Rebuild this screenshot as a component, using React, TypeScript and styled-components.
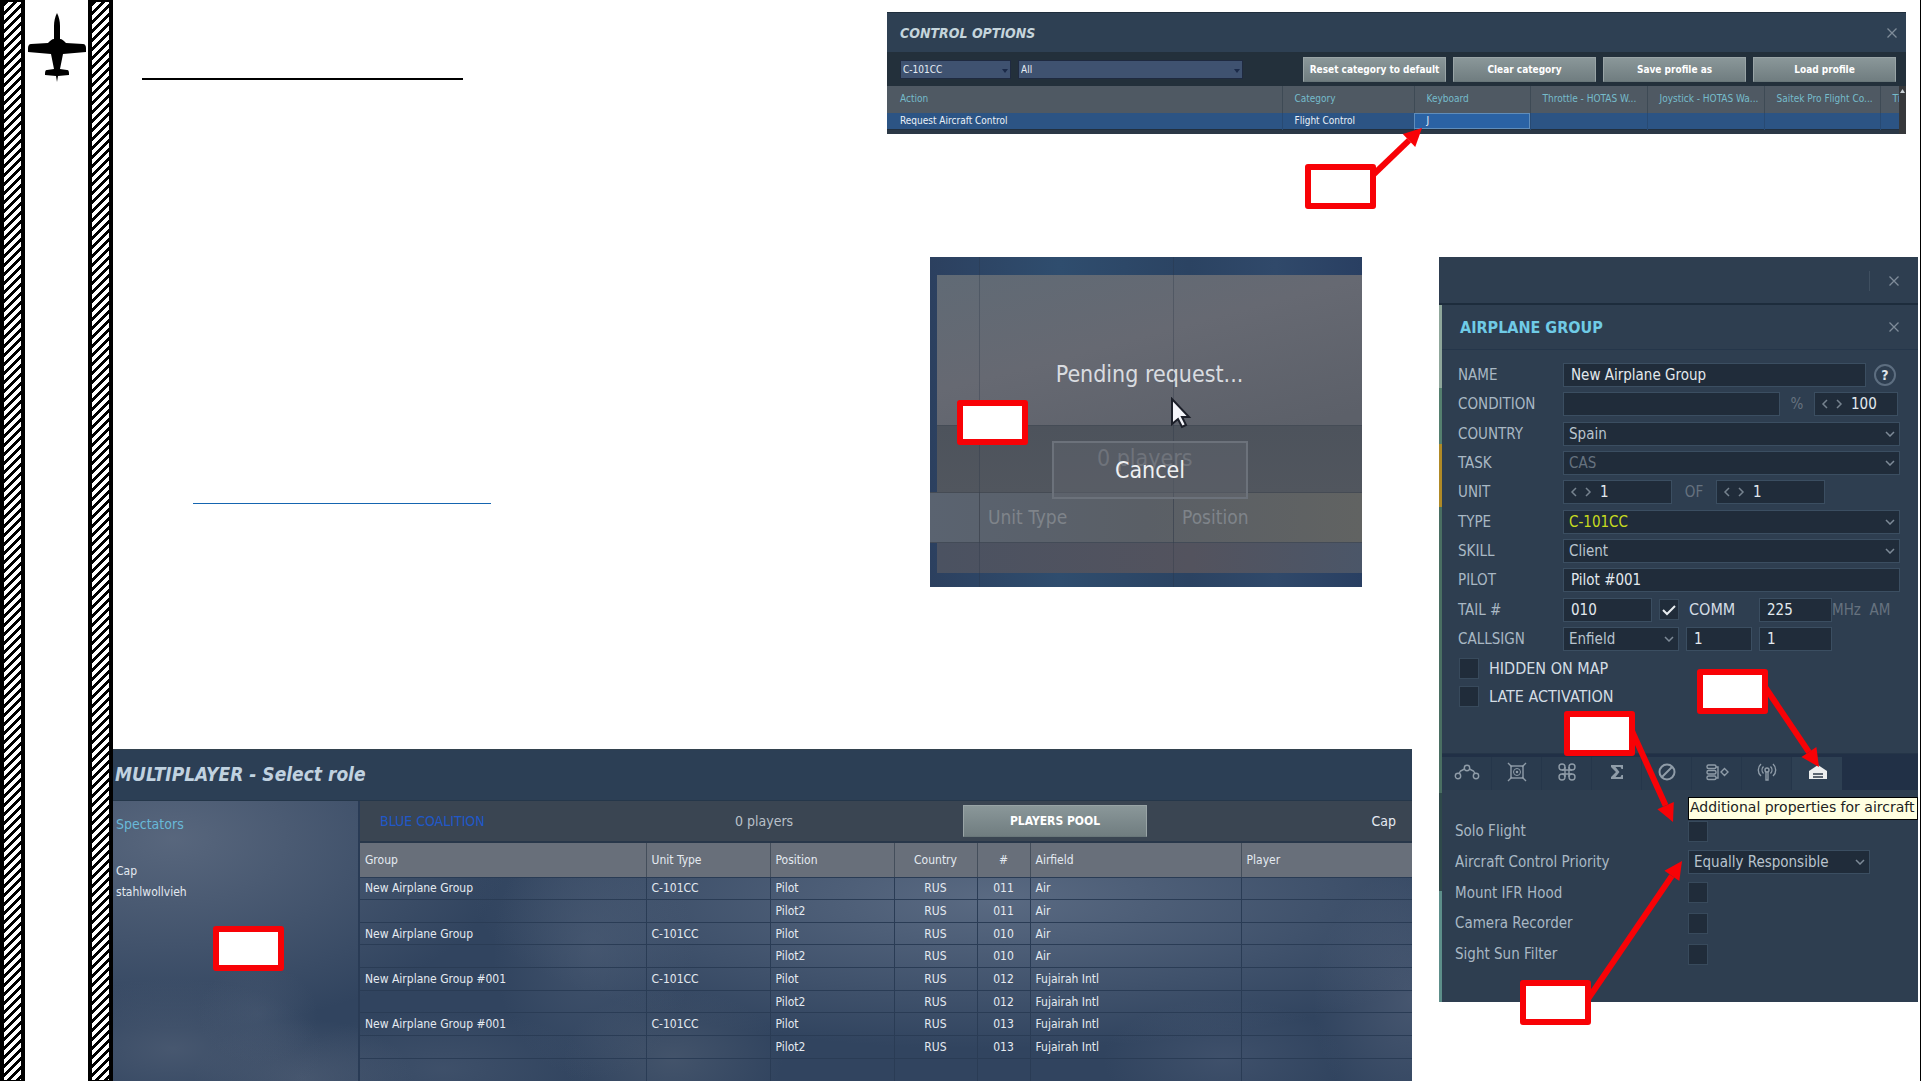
import React from 'react';
import styled, { createGlobalStyle, css } from 'styled-components';

const condensed = `'DejaVu Sans Condensed', 'DejaVu Sans', sans-serif`;

const GlobalStyle = createGlobalStyle`
  *, *::before, *::after { box-sizing: border-box; }
  body { margin: 0; background: #fff; font-family: ${condensed}; }
  button, input, select { font-family: inherit; margin: 0; }
`;

/* ---------- page ---------- */

const Page = styled.div`
  display: flex;
  min-height: 100vh;
  overflow: hidden;
  border-right: 1px solid #000;
`;

const Rail = styled.aside`
  display: flex;
  justify-content: space-between;
  flex: 0 0 113px;
`;

const Hatch = styled.div`
  width: 25px;
  border: 4px solid #000;
  border-top-width: 2px;
  border-bottom-width: 1px;
  background: linear-gradient(135deg, #000 0 23%, #fff 23% 50%, #000 50% 73%, #fff 73%) 0 0 / 9px 9px;
`;

const PlaneIcon = styled.svg`
  width: 58px;
  height: 70px;
  margin-top: 12px;
`;

const Main = styled.main`
  flex: 1;
  min-width: 0;
  display: flex;
  flex-direction: column;
`;

const TopRow = styled.div`
  display: flex;
  justify-content: space-between;
  align-items: flex-start;
  padding: 12px 14px 0 29px;
  margin-bottom: 123px;
`;

const BottomRow = styled.div`
  flex: 1;
  display: flex;
  justify-content: space-between;
  align-items: flex-start;
  gap: 27px;
  padding-right: 2px;
`;

const LeftColumn = styled.div`
  flex: 1;
  min-width: 0;
  display: flex;
  flex-direction: column;
  gap: 162px;
`;

const RequestRow = styled.div`
  display: flex;
  justify-content: space-between;
  align-items: flex-start;
  padding: 0 50px 0 80px;
`;

const TitleRule = styled.hr`
  width: 321px;
  margin: 66px 0 0;
  border: 0;
  border-top: 2px solid #000;
`;

const LinkRule = styled.hr`
  width: 298px;
  margin: 246px 0 0;
  border: 0;
  border-top: 1px solid #1565b0;
`;

/* ---------- annotations ---------- */

const Overlay = styled.div`
  position: absolute;
  inset: 0;
  z-index: 5;
  pointer-events: none;
`;

const Box = styled.div<{ $x: number; $y: number }>`
  position: absolute;
  left: ${p => p.$x}px;
  top: ${p => p.$y}px;
  width: 71px;
  height: 45px;
  background: #fff;
  border: 6px solid #f80206;
  border-radius: 3px;
`;

const ArrowLayer = styled.svg`
  position: absolute;
  inset: 0;
  width: 100%;
  height: 100%;
  overflow: visible;
`;

type Line = [number, number, number, number];

function Arrow({ line }: { line: Line }) {
  const [x1, y1, x2, y2] = line;
  const len = Math.hypot(x2 - x1, y2 - y1);
  const ux = (x2 - x1) / len;
  const uy = (y2 - y1) / len;
  const bx = x2 - ux * 18;
  const by = y2 - uy * 18;
  return (
    <g fill="#f80206" stroke="#f80206">
      <line x1={x1} y1={y1} x2={bx} y2={by} strokeWidth="6" />
      <polygon stroke="none" points={`${x2},${y2} ${bx - uy * 9},${by + ux * 9} ${bx + uy * 9},${by - ux * 9}`} />
    </g>
  );
}

function Annotations({ boxes, arrows = [] }: { boxes: [number, number][]; arrows?: Line[] }) {
  return (
    <Overlay aria-hidden="true">
      <ArrowLayer>{arrows.map((a, i) => <Arrow key={i} line={a} />)}</ArrowLayer>
      {boxes.map(([x, y]) => <Box key={`${x}-${y}`} $x={x} $y={y} />)}
    </Overlay>
  );
}

/* ---------- shared controls ---------- */

const silver = css`
  border: 1px solid #99a4a6;
  border-bottom-color: #69777a;
  background: linear-gradient(#8a9799, #707d80);
  color: #fff;
  font-weight: bold;
  padding: 0;
  white-space: nowrap;
`;

const CloseButton = styled.button`
  display: grid;
  place-items: center;
  width: 12px;
  height: 12px;
  padding: 0;
  border: 0;
  background: none;
  color: #7f8c99;
`;

function Close() {
  return (
    <CloseButton aria-label="Close">
      <svg width="12" height="12" viewBox="0 0 12 12" stroke="currentColor" strokeWidth="1.3">
        <path d="M1.500 1.500l9 9M10.500 1.500l-9 9" />
      </svg>
    </CloseButton>
  );
}

/* ---------- control options ---------- */

const ControlPanel = styled.section`
  position: relative;
  width: 1019px;
  height: 122px;
  background: #263440;
`;

const ControlHeader = styled.header`
  display: flex;
  align-items: center;
  justify-content: space-between;
  height: 40px;
  padding: 0 8px 0 13px;
  border-top: 1px solid #1f2e3d;
  background: #2e4053;
`;

const ControlTitle = styled.h2`
  margin: 0;
  font: italic bold 14px ${condensed};
  color: #c5d5dc;
`;

const ControlBar = styled.div`
  display: flex;
  align-items: center;
  height: 34px;
  padding: 0 10px 0 13px;
  background: #23303b;
`;

const ComboWrap = styled.div<{ $w: number }>`
  position: relative;
  width: ${p => p.$w}px;
  margin-right: 7px;

  svg { position: absolute; right: 3px; top: 9px; }
`;

const Combo = styled.select`
  display: block;
  appearance: none;
  width: 100%;
  height: 19px;
  padding: 0 2px;
  border: 1px solid #1f2a40;
  border-radius: 0;
  background: #3f5270;
  color: #e6edf4;
  font-size: 10px;
`;

const ButtonGroup = styled.div`
  display: flex;
  gap: 7px;
  margin-left: auto;
`;

const BarButton = styled.button`
  ${silver}
  width: 143px;
  height: 25px;
  font-size: 10px;
`;

const GridArea = styled.div`
  display: flex;
  height: 48px;
  overflow: hidden;
`;

const BindTable = styled.table`
  flex: 1;
  table-layout: fixed;
  border-collapse: collapse;
  width: 100%;
  background: #4f5963;
  font-size: 10px;
  text-align: left;

  th, td {
    padding: 0 0 0 12px;
    border-right: 1px solid #3e4a55;
    white-space: nowrap;
    overflow: hidden;
  }
  th:first-child, td:first-child { padding-left: 13px; }
  th:last-child, td:last-child { border-right: 0; }
  th { height: 27px; padding-bottom: 2px; font-weight: normal; color: #76bccb; }
  td { height: 16px; background: #2c5484; color: #eaf1f8; line-height: 14px; border-right-color: #284a73; }
`;

const ActiveCell = styled.td`
  && { background: #2a62a4; outline: 1px solid #5f8dbb; outline-offset: -1px; }
`;

const NextRow = styled.tr`
  && td { height: 5px; background: #2b3846; border-top: 1px solid #22303f; }
`;

const ScrollTrack = styled.div`
  width: 7px;
  background: #36383b;
  svg { display: block; margin: 3px auto; }
`;

const bindHeads: [string, number | undefined][] = [
  ['Action', undefined], ['Category', 132], ['Keyboard', 116], ['Throttle - HOTAS W...', 117],
  ['Joystick - HOTAS Wa...', 117], ['Saitek Pro Flight Co...', 116], ['Ti', 19],
];

function ControlOptions() {
  return (
    <ControlPanel>
      <ControlHeader>
        <ControlTitle>CONTROL OPTIONS</ControlTitle>
        <Close />
      </ControlHeader>
      <ControlBar>
        <ComboWrap $w={111}>
          <Combo aria-label="Aircraft"><option>C-101CC</option></Combo>
          <svg width="6" height="4"><path d="M0 0h6L3 4z" fill="#1b2a48" /></svg>
        </ComboWrap>
        <ComboWrap $w={225}>
          <Combo aria-label="Category"><option>All</option></Combo>
          <svg width="6" height="4"><path d="M0 0h6L3 4z" fill="#1b2a48" /></svg>
        </ComboWrap>
        <ButtonGroup>
          <BarButton>Reset category to default</BarButton>
          <BarButton>Clear category</BarButton>
          <BarButton>Save profile as</BarButton>
          <BarButton>Load profile</BarButton>
        </ButtonGroup>
      </ControlBar>
      <GridArea>
        <BindTable>
          <colgroup>{bindHeads.map(([h, w]) => <col key={h} width={w} />)}</colgroup>
          <thead><tr>{bindHeads.map(([h]) => <th key={h}>{h}</th>)}</tr></thead>
          <tbody>
            <tr>
              <td>Request Aircraft Control</td><td>Flight Control</td><ActiveCell>J</ActiveCell>
              <td /><td /><td /><td />
            </tr>
            <NextRow><td colSpan={7} /></NextRow>
          </tbody>
        </BindTable>
        <ScrollTrack><svg width="5" height="4"><path d="M0 4h5L2.500 0z" fill="#c9d0d4" /></svg></ScrollTrack>
      </GridArea>
      <Annotations boxes={[[418, 152]]} arrows={[[487, 162, 535, 116]]} />
    </ControlPanel>
  );
}

/* ---------- pending request ---------- */

const Pending = styled.section`
  position: relative;
  width: 432px;
  height: 330px;
  flex: none;
  display: grid;
  grid-template-rows: 18px 217px 51px 30px 14px;
  background: linear-gradient(90deg, #2c405f, #2f4d6e 30%, #2b4362 60%, #30496a 80%, #293f62);
`;

const Veil = styled.div`
  grid-row: 2;
  margin-left: 7px;
  display: flex;
  flex-direction: column;
  background: linear-gradient(165deg, #606a75, #666972 35%, #5c6069 75%);
`;

const Message = styled.p`
  flex: 1;
  margin: 0;
  padding-top: 86px;
  text-align: center;
  font-size: 23px;
  line-height: 27px;
  color: #d9dce0;
`;

const VeilBand = styled.div`
  height: 67px;
  border-top: 1px solid #454c56;
  background: linear-gradient(#4d535c, #51565e);
`;

const GhostHeader = styled.div`
  grid-row: 3;
  display: grid;
  grid-template-columns: 49px 194px 1fr;
  align-items: center;
  border-top: 1px solid #454b54;
  border-bottom: 1px solid #434b57;
  background: linear-gradient(90deg, #5a6370, #5a5f66 50%, #616362);
  font-size: 19px;
  color: #7f848a;

  span { padding-left: 8px; border-left: 1px solid #50555d; line-height: 49px; }
`;

const VeilFoot = styled.div`
  grid-row: 4;
  margin-left: 7px;
  background: linear-gradient(90deg, #4b5261, #53535e 60%, #4b5668);
`;

const CancelButton = styled.button`
  position: absolute;
  left: 122px;
  top: 184px;
  width: 196px;
  height: 58px;
  padding: 0;
  border: 2px solid #6c727b;
  background: rgba(98, 103, 110, 0.45);
  color: #eef0f2;
  font-size: 23px;
  line-height: 54px;
`;

const GhostCount = styled.span`
  position: absolute;
  left: 167px;
  top: 188px;
  font-size: 23px;
  line-height: 27px;
  color: #7a7f86;
`;

const Cursor = styled.svg`
  position: absolute;
  left: 240px;
  top: 140px;
`;

const GridLine = styled.i<{ $x: number }>`
  position: absolute;
  left: ${p => p.$x}px;
  top: 0;
  bottom: 0;
  width: 1px;
  background: rgba(40, 50, 66, 0.3);
`;

function PendingRequest() {
  return (
    <Pending>
      <Veil>
        <Message>Pending request...</Message>
        <VeilBand />
      </Veil>
      <GhostHeader><div /><span>Unit Type</span><span>Position</span></GhostHeader>
      <VeilFoot />
      <GridLine $x={49} />
      <GridLine $x={243} />
      <GhostCount>0 players</GhostCount>
      <CancelButton>Cancel</CancelButton>
      <Cursor width="22" height="32" viewBox="0 0 22 32">
        <path d="M2 2v25l6-5 4 8 4-2-4-8h7z" fill="#f4f5fa" stroke="#1c1f29" strokeWidth="2" />
      </Cursor>
      <Annotations boxes={[[27, 143]]} />
    </Pending>
  );
}

/* ---------- multiplayer ---------- */

const Multi = styled.section`
  position: relative;
  display: flex;
  flex-direction: column;
  flex: 1;
  color: #e4eaf1;
  background:
    radial-gradient(ellipse 60px 50px at 145px 265px, rgba(80, 96, 120, 0.4), transparent),
    radial-gradient(ellipse 150px 70px at 60px 300px, rgba(86, 100, 122, 0.6), transparent),
    radial-gradient(ellipse 110px 60px at 190px 330px, rgba(84, 98, 120, 0.6), transparent),
    radial-gradient(ellipse 340px 190px at 60px 90px, rgba(92, 106, 128, 0.9), transparent),
    radial-gradient(ellipse 100px 130px at 480px 200px, rgba(84, 100, 124, 0.45), transparent),
    radial-gradient(ellipse 150px 60px at 330px 320px, rgba(78, 94, 118, 0.45), transparent),
    radial-gradient(ellipse 110px 70px at 560px 310px, rgba(82, 96, 116, 0.55), transparent),
    radial-gradient(ellipse 520px 150px at 880px 150px, rgba(92, 108, 132, 0.95), transparent),
    radial-gradient(ellipse 120px 60px at 1110px 310px, rgba(76, 92, 118, 0.5), transparent),
    radial-gradient(ellipse 100px 130px at 1300px 250px, rgba(84, 98, 122, 0.6), transparent),
    #31445f;
`;

const MultiTitle = styled.h2`
  margin: 0;
  height: 52px;
  padding-left: 2px;
  border-top: 1px solid #33424e;
  border-bottom: 1px solid #25374a;
  background: #2c3f55;
  font: italic bold 19px/49px ${condensed};
  color: #c0d2e0;
`;

const MultiBody = styled.div`
  flex: 1;
  display: flex;
`;

const Spectators = styled.div`
  width: 247px;
  padding: 13px 3px 0;
  border-right: 2px solid #293b55;
  font-size: 12px;

  h3 { margin: 0 0 26px; font-size: 14px; font-weight: normal; line-height: 21px; color: #68b9d8; }
  p { margin: 0; line-height: 21px; }
`;

const Roles = styled.div`
  flex: 1;
  min-width: 0;
`;

const Coalition = styled.div`
  display: grid;
  grid-template-columns: 355px 248px 184px 1fr;
  align-items: center;
  height: 42px;
  padding: 0 16px 0 0;
  border-bottom: 2px solid #28374a;
  background: #3a4552;
  font-size: 14px;
`;

const BlueName = styled.span`
  padding-left: 20px;
  color: #2058c8;
`;

const PlayerCount = styled.span`
  padding-left: 20px;
  color: #b9c0c9;
`;

const PoolButton = styled.button`
  ${silver}
  height: 32px;
  font-size: 12px;
`;

const Caption = styled.span`
  text-align: right;
`;

const RoleTable = styled.table`
  width: 100%;
  height: 238px;
  table-layout: fixed;
  border-collapse: collapse;
  font-size: 12px;

  th, td {
    padding: 0 0 0 5px;
    text-align: left;
    border-right: 1px solid #2a3c55;
    border-bottom: 1px solid #2a3c55;
    white-space: nowrap;
  }
  th { height: 34px; font-weight: normal; background: #686f7a; border-right-color: #444e5b; }
  td { height: 20px; line-height: 14px; }
  th:last-child, td:last-child { border-right: 0; }
  tbody tr:last-child td { border-bottom: 0; }
  th:nth-child(4), th:nth-child(5), td:nth-child(4), td:nth-child(5) { padding: 0; text-align: center; }
`;

const roleCols: [string, number | undefined][] = [
  ['Group', 286], ['Unit Type', 124], ['Position', 124], ['Country', 83], ['#', 53], ['Airfield', 211], ['Player', undefined],
];

const roleGroups = [
  { name: 'New Airplane Group', num: '011', field: 'Air' },
  { name: 'New Airplane Group', num: '010', field: 'Air' },
  { name: 'New Airplane Group #001', num: '012', field: 'Fujairah Intl' },
  { name: 'New Airplane Group #001', num: '013', field: 'Fujairah Intl' },
];

function Multiplayer() {
  return (
    <Multi>
      <MultiTitle>MULTIPLAYER - Select role</MultiTitle>
      <MultiBody>
        <Spectators>
          <h3>Spectators</h3>
          <p>Cap</p>
          <p>stahlwollvieh</p>
        </Spectators>
        <Roles>
          <Coalition>
            <BlueName>BLUE COALITION</BlueName>
            <PlayerCount>0 players</PlayerCount>
            <PoolButton>PLAYERS POOL</PoolButton>
            <Caption>Cap</Caption>
          </Coalition>
          <RoleTable>
            <colgroup>{roleCols.map(([h, w]) => <col key={h} width={w} />)}</colgroup>
            <thead><tr>{roleCols.map(([h]) => <th key={h}>{h}</th>)}</tr></thead>
            <tbody>
              {roleGroups.map(g => (
                <React.Fragment key={g.num}>
                  <tr><td>{g.name}</td><td>C-101CC</td><td>Pilot</td><td>RUS</td><td>{g.num}</td><td>{g.field}</td><td /></tr>
                  <tr><td /><td /><td>Pilot2</td><td>RUS</td><td>{g.num}</td><td>{g.field}</td><td /></tr>
                </React.Fragment>
              ))}
              <tr>{roleCols.map(([h]) => <td key={h} />)}</tr>
            </tbody>
          </RoleTable>
        </Roles>
      </MultiBody>
      <Annotations boxes={[[100, 177]]} />
    </Multi>
  );
}

/* ---------- airplane group ---------- */

const Airplane = styled.section`
  position: relative;
  flex: 0 0 479px;
  height: 745px;
  display: flex;
  flex-direction: column;
  background: #2e3e50;
  color: #a9b8c4;
  font-size: 15px;
`;

const WindowBar = styled.div`
  display: flex;
  align-items: center;
  justify-content: flex-end;
  gap: 18px;
  height: 48px;
  padding: 2px 18px 0 0;
  border-bottom: 2px solid #1d2c3c;

  &::before { content: ''; height: 20px; border-left: 1px solid #3f4f60; }
`;

const AirBody = styled.div`
  flex: 1;
  border-left: 3px solid #4f7573;
  border-image: linear-gradient(#8fa79b 0 12%, #55806f 12% 20%, #b08a26 20% 29%, #4a6f62 29% 70%, #2f4a4a 70% 84%, #5d8f8a 84%) 1;
`;

const AirHeader = styled.div`
  display: flex;
  align-items: center;
  justify-content: space-between;
  height: 45px;
  padding: 0 18px;
  border-bottom: 1px solid #25364a;

  h2 { margin: 0; font-size: 16px; color: #6fcbe6; }
`;

const Fields = styled.form`
  display: flex;
  flex-direction: column;
  justify-content: space-between;
  height: 288px;
  margin: 13px 18px 3px 16px;
`;

const FieldRow = styled.div`
  display: grid;
  grid-template-columns: 105px 1fr;
  align-items: center;
  height: 24px;
`;

const Cell = styled.div`
  display: flex;
  align-items: center;
`;

const Gap = styled.span`
  width: 7px;
`;

const sunken = css`
  height: 24px;
  border: 1px solid #3b4e61;
  border-radius: 0;
  background: #202c3a;
  color: #e3e9ee;
  font-size: 15px;
`;

const TextInput = styled.input<{ $w?: number }>`
  ${sunken}
  width: ${p => (p.$w ? `${p.$w}px` : '100%')};
  padding: 0 7px;
`;

const SelectWrap = styled.div<{ $w?: number }>`
  position: relative;
  width: ${p => (p.$w ? `${p.$w}px` : '100%')};
  svg { position: absolute; right: 5px; top: 9px; }
`;

const Select = styled.select<{ $color?: string }>`
  ${sunken}
  display: block;
  appearance: none;
  width: 100%;
  padding: 0 5px;
  color: ${p => p.$color || '#b9c4ce'};
  opacity: 1;
`;

const SpinBox = styled.div<{ $w: number }>`
  ${sunken}
  display: flex;
  align-items: center;
  width: ${p => p.$w}px;
  padding-left: 6px;

  button { padding: 0; width: 14px; height: 22px; border: 0; background: none; color: #76838f; }
  svg { display: block; }
  input { min-width: 0; flex: 1; padding: 0 0 0 2px; border: 0; background: none; color: inherit; font-size: 15px; }
`;

const Muted = styled.span<{ $w?: number }>`
  width: ${p => (p.$w ? `${p.$w}px` : 'auto')};
  text-align: center;
  white-space: pre;
  color: #66727f;
`;

const HelpButton = styled.button`
  width: 22px;
  height: 22px;
  margin-left: 8px;
  padding: 0;
  flex: none;
  border: 2px solid #5d6e80;
  border-radius: 50%;
  background: none;
  color: #dfe5ea;
  font-size: 14px;
  font-weight: bold;
  line-height: 18px;
`;

const Check = styled.input`
  appearance: none;
  flex: none;
  width: 20px;
  height: 21px;
  border: 1px solid #384a5c;
  background: #202c3a;

  &:checked {
    background: #202c3a url("data:image/svg+xml,%3Csvg xmlns='http://www.w3.org/2000/svg' width='18' height='18'%3E%3Cpath d='M3 9l4 4 8-8' fill='none' stroke='%23e8edf0' stroke-width='2'/%3E%3C/svg%3E") center no-repeat;
  }
`;

const CommLabel = styled.label`
  flex: none;
  width: 80px;
  padding-left: 10px;
  font-size: 16px;
  color: #d4dde4;
`;

const FlagRow = styled.label`
  display: flex;
  align-items: center;
  gap: 10px;
  height: 28px;
  margin-left: 17px;
  font-size: 16px;
  color: #d4dde4;
`;

const Tabs = styled.div`
  display: flex;
  height: 37px;
  margin-top: 43px;
  padding-top: 3px;
  border-top: 1px solid #253548;
  background: #213046;
`;

const Tab = styled.button<{ $active?: boolean }>`
  display: grid;
  place-items: center;
  width: 50px;
  padding: 0 0 4px;
  border: 0;
  border-right: 1px solid ${p => (p.$active ? '#2e4053' : '#25364a')};
  background: ${p => (p.$active ? '#2e4053' : '#2a3b4e')};
  color: ${p => (p.$active ? '#eceeee' : '#8f9ca8')};
`;

const Props = styled.div`
  display: flex;
  flex-direction: column;
  justify-content: space-between;
  height: 147px;
  margin: 29px 0 0 13px;
`;

const PropRow = styled.div`
  display: grid;
  grid-template-columns: 233px 1fr;
  align-items: center;
  height: 24px;
`;

const Tooltip = styled.div`
  position: absolute;
  left: 249px;
  right: 0;
  top: 540px;
  height: 23px;
  padding-left: 1px;
  border: 1px solid #000;
  background: #ffffe1;
  color: #22221e;
  font: 14px/18px 'DejaVu Sans', sans-serif;
  white-space: nowrap;
  overflow: hidden;
`;

function Chevron() {
  return (
    <svg width="10" height="6" viewBox="0 0 10 6" fill="none" stroke="#7d8a97" strokeWidth="1.5">
      <path d="M1 1l4 4 4-4" />
    </svg>
  );
}

function Pick({ id, value, w, color, disabled }: { id: string; value: string; w?: number; color?: string; disabled?: boolean }) {
  return (
    <SelectWrap $w={w}>
      <Select id={id} $color={color} disabled={disabled}><option>{value}</option></Select>
      <Chevron />
    </SelectWrap>
  );
}

function Spin({ id, value, w, label }: { id: string; value: string; w: number; label?: string }) {
  return (
    <SpinBox $w={w}>
      <button type="button" aria-label="Decrease"><svg width="8" height="10" fill="none" stroke="currentColor" strokeWidth="1.5"><path d="M6 1L2 5l4 4" /></svg></button>
      <button type="button" aria-label="Increase"><svg width="8" height="10" fill="none" stroke="currentColor" strokeWidth="1.5"><path d="M2 1l4 4-4 4" /></svg></button>
      <input id={id} aria-label={label} defaultValue={value} />
    </SpinBox>
  );
}

const tabIcons: { name: string; art: React.ReactNode }[] = [
  { name: 'Route', art: <><circle cx="4" cy="17" r="2.700" /><circle cx="13" cy="9" r="2.700" /><circle cx="22" cy="17" r="2.700" /><path d="M5 14.500L6.500 12l4-2M15.500 10l4 2 1.500 2.500" /></> },
  { name: 'Targets', art: <><rect x="7" y="7" width="12" height="12" /><circle cx="13" cy="13" r="3.500" strokeWidth="1" /><circle cx="13" cy="13" r=".6" /><path d="M4 4l4 4M22 4l-4 4M4 22l4-4M22 22l-4-4" /></> },
  { name: 'Triggered actions', art: <><path d="M11 8v10M15 8v10M8 11h10M8 15h10" /><circle cx="8" cy="8" r="3" /><circle cx="18" cy="8" r="3" /><circle cx="8" cy="18" r="3" /><circle cx="18" cy="18" r="3" /></> },
  { name: 'Summary', art: <path d="M7 6h12v4h-1.500l-1-2h-5l4 5-4 5h5l1-2H19v4H7v-2l5-5-5-5z" fill="currentColor" stroke="none" /> },
  { name: 'Failures', art: <g strokeWidth="2"><circle cx="13" cy="13" r="7.500" /><path d="M8 18L18 8" /></g> },
  { name: 'Payload', art: <><rect x="3" y="6" width="9" height="3.500" rx="1.500" /><rect x="3" y="11.500" width="9" height="3.500" rx="1.500" /><rect x="3" y="17" width="9" height="3.500" rx="1.500" /><path d="M12 8h2v11h-2M17 13l3.500-3.500L24 13l-3.500 3.500z" /></> },
  { name: 'Radio', art: <><circle cx="13" cy="11" r="2" /><path d="M12 13v8h2v-8M9.500 14.500a5 5 0 010-7M16.500 14.500a5 5 0 000-7M7 17a8 8 0 010-12M19 17a8 8 0 000-12" /></> },
  { name: 'Additional properties', art: <><path d="M5 20v-8l3-2 6-4 6 4 3 2v8z" fill="currentColor" stroke="none" /><path d="M9 15h10M9 18h10" stroke="#2b3947" /></> },
];

const labelled: [string, string, React.ReactNode][] = [
  ['NAME', 'name', <><TextInput id="name" $w={303} defaultValue="New Airplane Group" /><HelpButton type="button" aria-label="Help">?</HelpButton></>],
  ['CONDITION', 'condition', <><TextInput id="condition" $w={217} /><Muted $w={34}>%</Muted><Spin id="chance" label="Chance" value="100" w={84} /></>],
  ['COUNTRY', 'country', <Pick id="country" value="Spain" />],
  ['TASK', 'task', <Pick id="task" value="CAS" color="#66727f" disabled />],
  ['UNIT', 'unit', <><Spin id="unit" value="1" w={109} /><Muted $w={44}>OF</Muted><Spin id="unit-total" label="Unit count" value="1" w={109} /></>],
  ['TYPE', 'type', <Pick id="type" value="C-101CC" color="#c8dc1e" />],
  ['SKILL', 'skill', <Pick id="skill" value="Client" />],
  ['PILOT', 'pilot', <TextInput id="pilot" defaultValue="Pilot #001" />],
  ['TAIL #', 'tail', <><TextInput id="tail" $w={89} defaultValue="010" /><Gap /><Check id="comm" type="checkbox" defaultChecked /><CommLabel htmlFor="comm">COMM</CommLabel><TextInput aria-label="Frequency" $w={73} defaultValue="225" /><Muted>MHz  AM</Muted></>],
  ['CALLSIGN', 'callsign', <><Pick id="callsign" value="Enfield" w={116} /><Gap /><TextInput aria-label="Flight" $w={66} defaultValue="1" /><Gap /><TextInput aria-label="Number" $w={73} defaultValue="1" /></>],
];

function AirplaneGroup() {
  return (
    <Airplane>
      <WindowBar><Close /></WindowBar>
      <AirBody>
        <AirHeader><h2>AIRPLANE GROUP</h2><Close /></AirHeader>
        <Fields>
          {labelled.map(([label, id, control]) => (
            <FieldRow key={id}><label htmlFor={id}>{label}</label><Cell>{control}</Cell></FieldRow>
          ))}
        </Fields>
        <FlagRow><Check type="checkbox" />HIDDEN ON MAP</FlagRow>
        <FlagRow><Check type="checkbox" />LATE ACTIVATION</FlagRow>
        <Tabs>
          {tabIcons.map((t, i) => (
            <Tab key={t.name} aria-label={t.name} $active={i === tabIcons.length - 1}>
              <svg width="26" height="26" viewBox="0 0 26 26" fill="none" stroke="currentColor" strokeWidth="1.4">{t.art}</svg>
            </Tab>
          ))}
        </Tabs>
        <Props>
          <PropRow><label htmlFor="solo">Solo Flight</label><Check id="solo" type="checkbox" /></PropRow>
          <PropRow><label htmlFor="priority">Aircraft Control Priority</label><Pick id="priority" value="Equally Responsible" w={182} /></PropRow>
          <PropRow><label htmlFor="hood">Mount IFR Hood</label><Check id="hood" type="checkbox" /></PropRow>
          <PropRow><label htmlFor="camera">Camera Recorder</label><Check id="camera" type="checkbox" /></PropRow>
          <PropRow><label htmlFor="sun">Sight Sun Filter</label><Check id="sun" type="checkbox" /></PropRow>
        </Props>
      </AirBody>
      <Tooltip role="tooltip">Additional properties for aircraft</Tooltip>
      <Annotations
        boxes={[[125, 454], [258, 412], [81, 723]]}
        arrows={[[193, 474, 234, 565], [326, 430, 380, 510], [149, 742, 243, 604]]}
      />
    </Airplane>
  );
}

export default function App() {
  return (
    <Page>
      <GlobalStyle />
      <Rail>
        <Hatch />
        <PlaneIcon viewBox="0 0 58 70" aria-label="Aircraft">
          <path d="M29 1C31 5 32 9 32 14v13c2 0 4 2 6 4l17 1c2 0 3 2 3 4v4l-23 2c-1 5-2 10-3 15l7 1c2 0 2 2 2 5l-11 1-1 6-1-6-11-1c0-3 0-5 2-5l7-1c-1-5-2-10-3-15L0 40v-4c0-2 1-4 3-4l17-1c2-2 4-4 6-4V14c0-5 1-9 3-13z" />
        </PlaneIcon>
        <Hatch />
      </Rail>
      <Main>
        <TopRow>
          <TitleRule />
          <ControlOptions />
        </TopRow>
        <BottomRow>
          <LeftColumn>
            <RequestRow>
              <LinkRule />
              <PendingRequest />
            </RequestRow>
            <Multiplayer />
          </LeftColumn>
          <AirplaneGroup />
        </BottomRow>
      </Main>
    </Page>
  );
}
